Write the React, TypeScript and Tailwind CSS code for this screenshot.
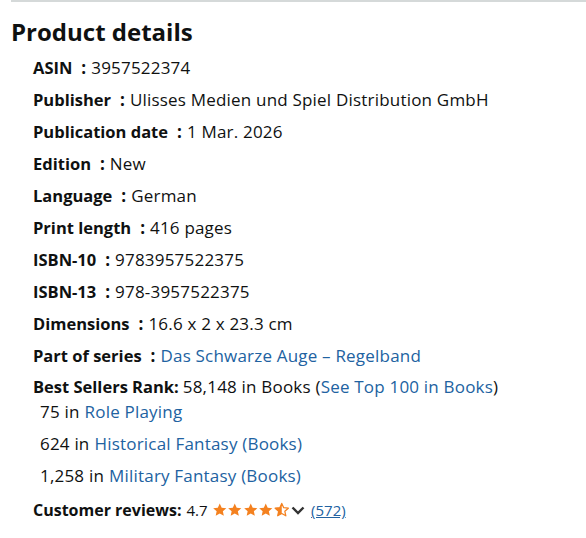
import React from 'react'

const rows: { label: string; value: string; link?: boolean }[] = [
  { label: 'ASIN', value: '3957522374' },
  { label: 'Publisher', value: 'Ulisses Medien und Spiel Distribution GmbH' },
  { label: 'Publication date', value: '1 Mar. 2026' },
  { label: 'Edition', value: 'New' },
  { label: 'Language', value: 'German' },
  { label: 'Print length', value: '416 pages' },
  { label: 'ISBN-10', value: '9783957522375' },
  { label: 'ISBN-13', value: '978-3957522375' },
  { label: 'Dimensions', value: '16.6 x 2 x 23.3 cm' },
  { label: 'Part of series', value: 'Das Schwarze Auge – Regelband', link: true },
]

function Star({ fill }: { fill: 'full' | 'half' }) {
  const d = 'M8 1.2l2 4.4 4.8.5-3.6 3.2 1 4.7L8 11.6 3.8 14l1-4.7L1.2 6.1 6 5.6z'
  return (
    <svg width="15.5" height="16" viewBox="0 0 16 16" className="shrink-0">
      {fill === 'full' ? (
        <path d={d} fill="#f4811f" />
      ) : (
        <>
          <defs>
            <clipPath id="half">
              <rect x="0" y="0" width="8" height="16" />
            </clipPath>
          </defs>
          <path d={d} fill="none" stroke="#f4811f" strokeWidth="1.3" strokeLinejoin="round" />
          <path d={d} fill="#f4811f" clipPath="url(#half)" />
        </>
      )}
    </svg>
  )
}

export default function App() {
  return (
    <div className="bg-white text-[#0f1111] w-[586px] h-[538px] pl-[11px] text-[17px] leading-[22px]" style={{ fontFamily: '"Open Sans", Arial, sans-serif' }}>
      <div className="border-t-2 border-[#d5d9d9] pt-[14px]">
        <h2 className="text-[24px] leading-[32px] font-bold">Product details</h2>
        <ul className="pl-[22px] mt-[4px]">
          {rows.map((r) => (
            <li key={r.label} className="h-[32px] flex items-center">
              <span className="font-bold text-[16.5px]">{r.label}</span>
              <span className="font-bold ml-[9px] mr-[5px]">:</span>
              <span className={'tracking-[0.2px] ' + (r.link ? 'text-[#2162a1]' : '')}>{r.value}</span>
            </li>
          ))}
          <li className="mt-[4px]">
            <div className="flex items-center h-[22px]">
              <span className="font-bold text-[16.5px]">Best Sellers Rank:</span>
              <span className="ml-[4px] tracking-[0.2px]">
                58,148 in Books (<span className="text-[#2162a1]">See Top 100 in Books</span>)
              </span>
            </div>
            <ul className="pl-[7px] tracking-[0.2px]">
              <li className="h-[28px] flex items-center">
                75 in <span className="text-[#2162a1] ml-[5px]">Role Playing</span>
              </li>
              <li className="h-[32px] mt-[2px] flex items-center">
                624 in <span className="text-[#2162a1] ml-[5px]">Historical Fantasy (Books)</span>
              </li>
              <li className="h-[32px] flex items-center">
                1,258 in <span className="text-[#2162a1] ml-[5px]">Military Fantasy (Books)</span>
              </li>
            </ul>
          </li>
          <li className="mt-[6px] flex items-center h-[24px]">
            <span className="font-bold text-[16px]">Customer reviews:</span>
            <span className="ml-[5px] text-[15px]">4.7</span>
            <span className="flex ml-[4px]">
              <Star fill="full" />
              <Star fill="full" />
              <Star fill="full" />
              <Star fill="full" />
              <Star fill="half" />
            </span>
            <svg width="16" height="16" viewBox="0 0 16 16" className="ml-[1px]">
              <path d="M2.5 5.5l5.5 5.5 5.5-5.5" fill="none" stroke="#333" strokeWidth="2.4" />
            </svg>
            <span className="ml-[5px] text-[15px] text-[#2162a1] underline">(572)</span>
          </li>
        </ul>
      </div>
    </div>
  )
}
